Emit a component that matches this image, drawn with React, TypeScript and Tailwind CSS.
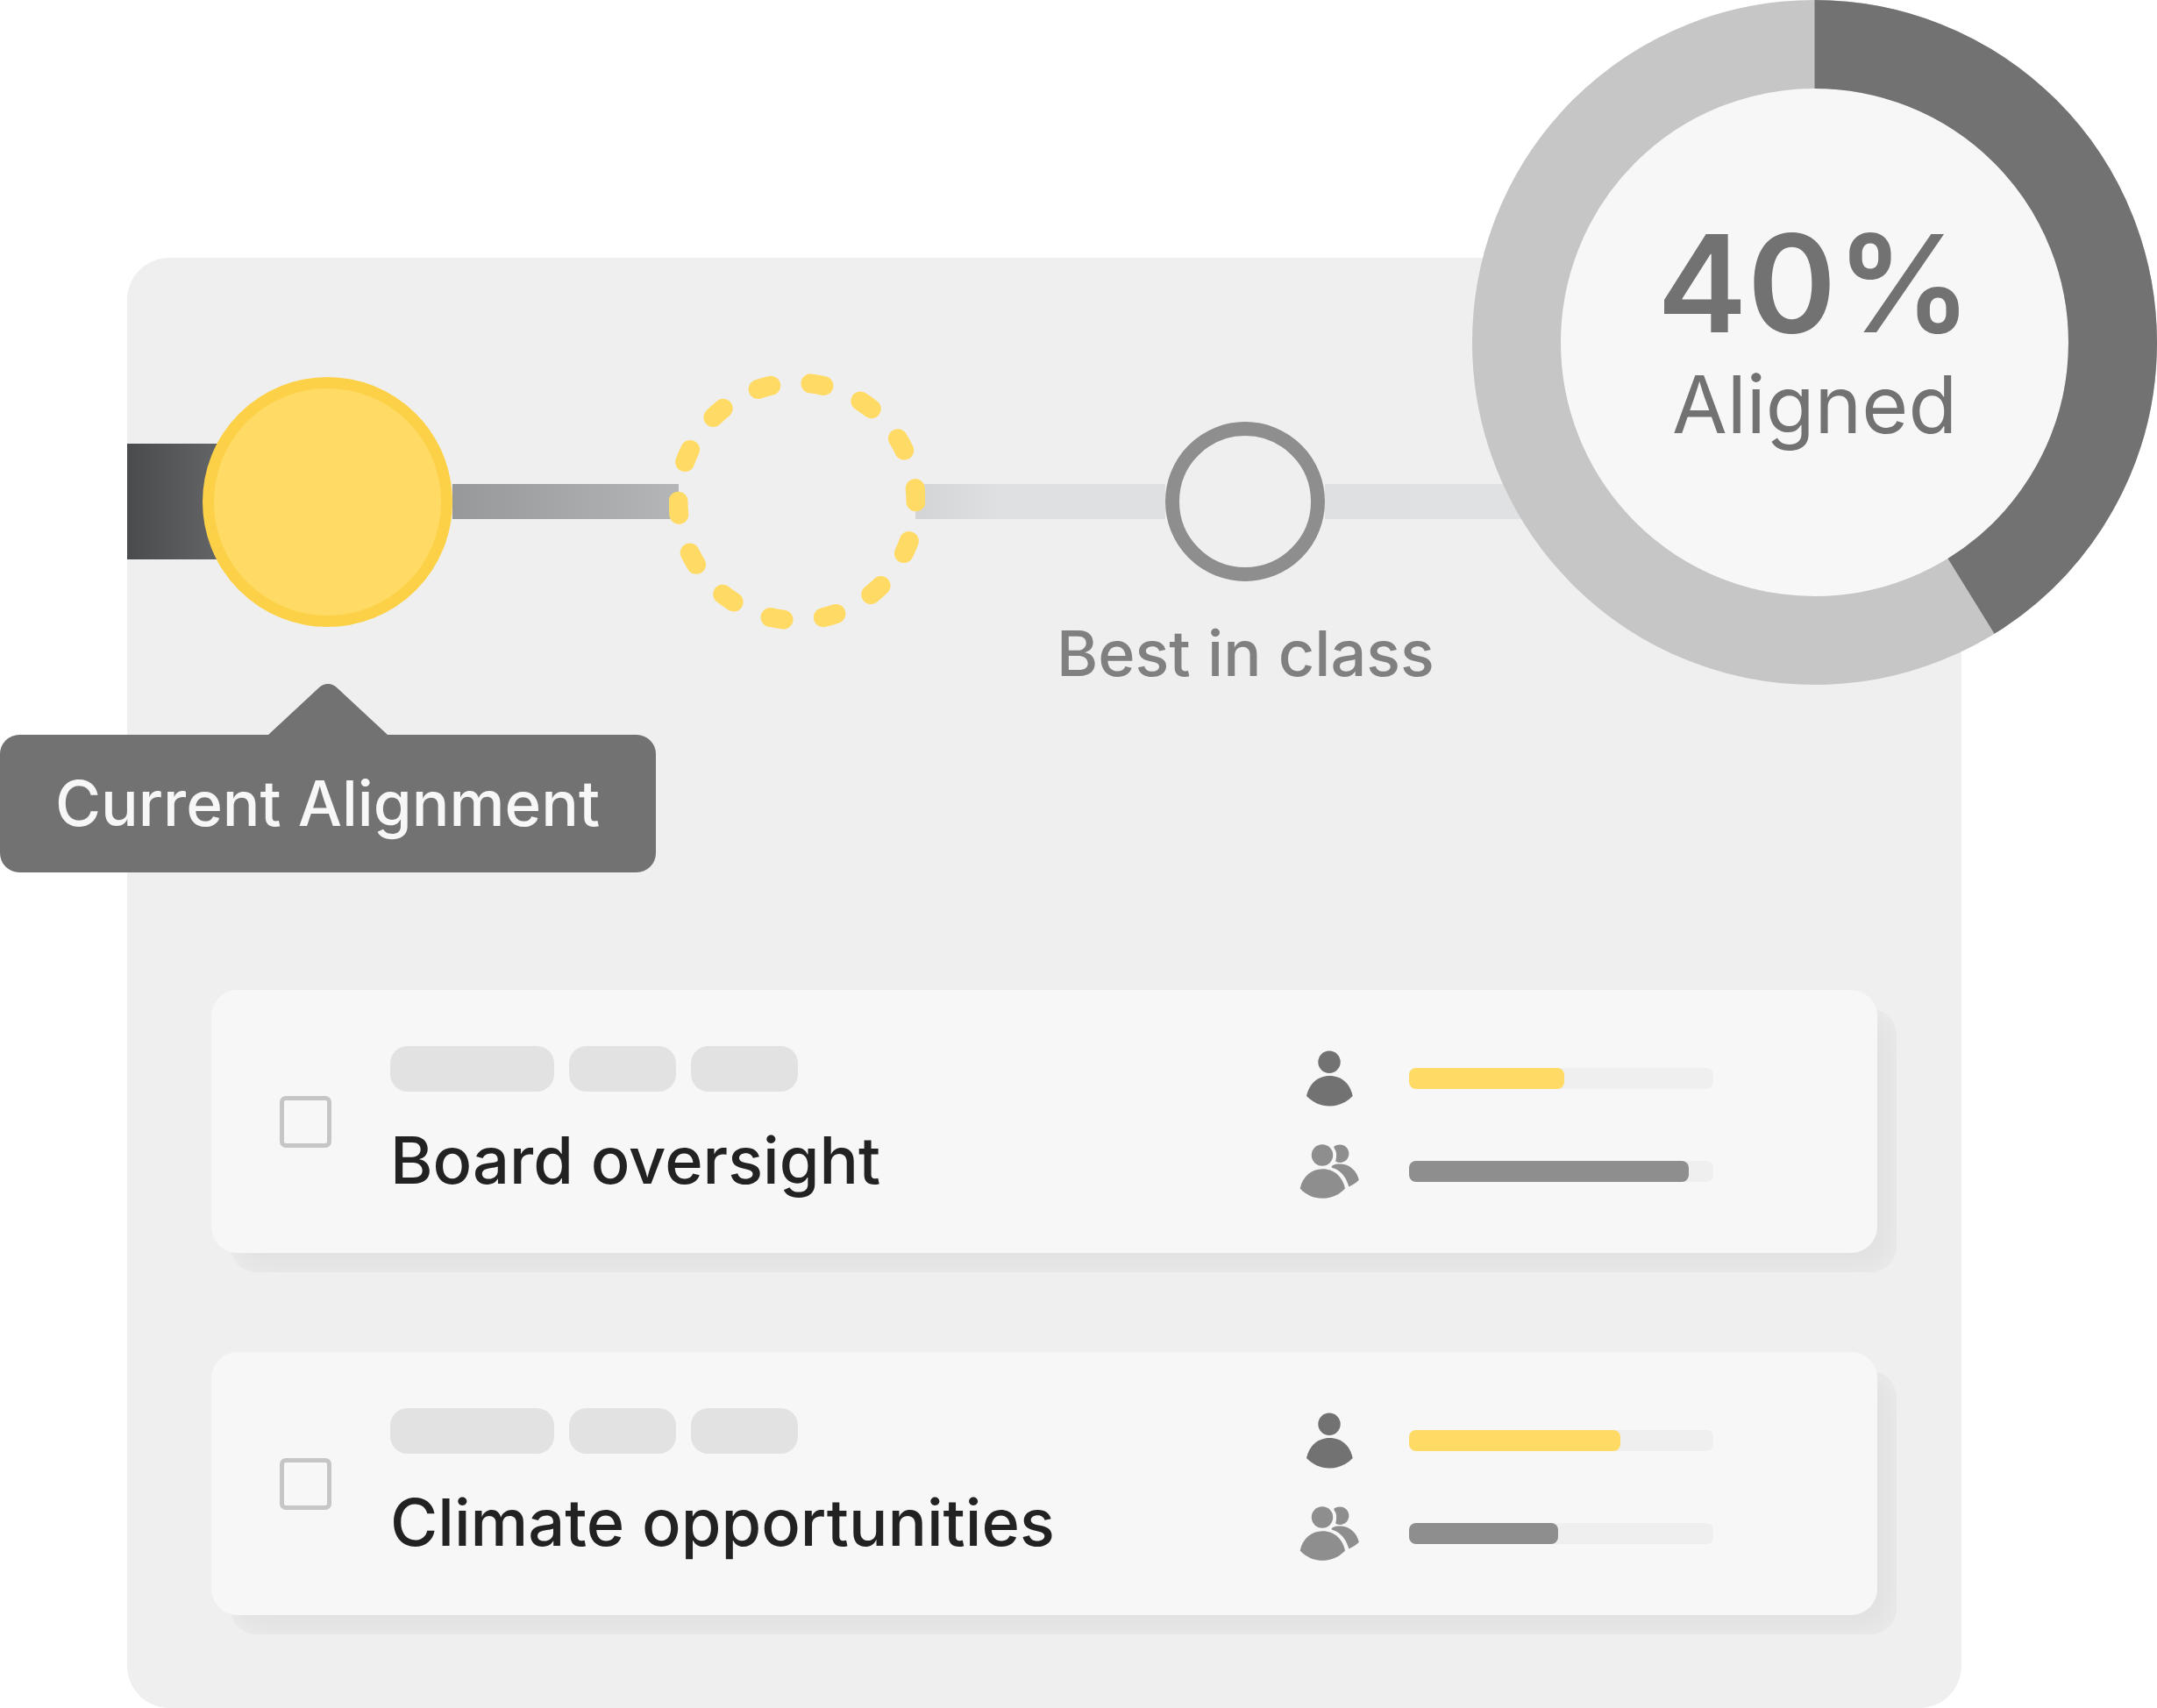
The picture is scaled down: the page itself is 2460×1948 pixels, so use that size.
type Topic = {
  id: string;
  title: string;
  own: number;
  peers: number;
};

const topics: Topic[] = [
  { id: 'board', title: 'Board oversight', own: 51, peers: 92 },
  { id: 'climate', title: 'Climate opportunities', own: 69.5, peers: 49 },
];

function PersonIcon() {
  return (
    <svg viewBox="0 0 68 64" className="w-[68px] h-16 shrink-0 fill-[#727272]">
      <circle cx="34" cy="13.3" r="12.7" />
      <path d="M8 52 C11 38 21 29 34.3 29 C48 29 58 38 60.7 52 C54 59 45 63.5 34.3 63.5 C24 63.5 15 59 8 52 Z" />
    </svg>
  );
}

function PeopleIcon() {
  return (
    <svg viewBox="0 0 68 64" className="w-[68px] h-16 shrink-0 fill-[#8e8e8e]">
      <circle cx="26" cy="13.5" r="12.2" />
      <path d="M0.7 51.5 C3.5 38 13.5 29.3 26.3 29.3 C39.5 29.3 49.3 38 52 51.5 C45 59 36.5 62.8 26.3 62.8 C16 62.8 8 59 0.7 51.5 Z" />
      {/* second person, partly hidden */}
      <path d="M39.3 3.8 C41 2 43.5 1.5 46.3 1.5 C52 1.5 56.4 6 56.4 11.6 C56.4 17.5 52 22 46.3 22 C44.3 22 42.6 21.5 41.2 20.4 C42.3 16.5 42.4 12 41.6 9 C41 6.8 39 5.5 39.3 3.8 Z" />
      <path d="M36.6 26.4 C38 24.3 42.5 23.4 47.3 23.4 C57.5 24 65.5 31 67.8 41.8 C65 45 61 47.5 56.4 49.4 C53.5 39.5 48.5 32 39.5 28.6 C37.8 28 36.6 27.6 36.6 26.4 Z" />
    </svg>
  );
}

function Bar({ value, label, color }: { value: number; label: string; color: string }) {
  return (
    <div
      role="progressbar"
      aria-label={label}
      aria-valuenow={value}
      className="w-[347px] h-6 rounded-lg bg-[#efefef]"
    >
      <div className={`h-full rounded-lg ${color}`} style={{ width: `${value}%` }}></div>
    </div>
  );
}

function TopicCard({ id, title, own, peers }: Topic) {
  return (
    <li className="relative">
      {/* Card shadow */}
      <div className="absolute top-[22px] left-[22px] w-full h-full rounded-[30px] bg-[#e1e1e1] shadow-[inset_0_0_36px_#eeeeee]"></div>

      <div className="relative flex items-center h-[300px] pl-[78px] pr-[187px] rounded-[30px] bg-[#f7f7f7]">
        <input
          id={id}
          type="checkbox"
          className="appearance-none size-[59px] shrink-0 border-[5px] border-[#c6c6c6] rounded-[7px] checked:bg-[#c6c6c6]"
        />
        <div className="flex-1 pl-[67px]">
          <div className="flex gap-[17px]">
            <div className="w-[187px] h-[52px] rounded-[20px] bg-[#e2e2e2]"></div>
            <div className="w-[122px] h-[52px] rounded-[20px] bg-[#e2e2e2]"></div>
            <div className="w-[122px] h-[52px] rounded-[20px] bg-[#e2e2e2]"></div>
          </div>
          <label
            htmlFor={id}
            className="block mt-9 text-[74px] leading-[84px] font-medium text-[#222222] whitespace-nowrap"
          >
            {title}
          </label>
        </div>
        <div className="flex flex-col gap-[42px] pt-2">
          <div className="flex items-center gap-[57px]">
            <PersonIcon />
            <Bar value={own} label={`${title}, own`} color="bg-[#ffdb66]" />
          </div>
          <div className="flex items-center gap-[57px]">
            <PeopleIcon />
            <Bar value={peers} label={`${title}, peers`} color="bg-[#8e8e8e]" />
          </div>
        </div>
      </div>
    </li>
  );
}

function Timeline() {
  return (
    <div className="flex items-center h-[292px]">
      <div className="w-[110px] h-[132px] shrink-0 bg-linear-to-r from-[#4a4b4c] to-[#656668]"></div>

      {/* Current step */}
      <div className="relative z-10 size-[285px] -ml-6 shrink-0 rounded-full border-[13px] border-[#fdd147] bg-[#ffdb66]">
        <div className="absolute top-full left-1/2 -translate-x-1/2 mt-[78px] flex flex-col items-center">
          <svg viewBox="0 0 136 58" className="w-[136px] h-[58px] fill-[#727272]">
            <path d="M0 58 L57 5 Q62 0 68 0 Q74 0 79 5 L136 58 Z" />
          </svg>
          <div className="w-[748px] h-[157px] flex items-center justify-center rounded-[22px] bg-[#727272] text-[71px] font-medium text-[#f7f7f7] whitespace-nowrap">
            Current Alignment
          </div>
        </div>
      </div>

      <div className="flex-[258] h-10 bg-linear-to-r from-[#97989a] to-[#b5b6b8]"></div>

      {/* Target step */}
      <svg
        viewBox="0 0 292 292"
        className="relative z-10 size-[292px] -mx-[11px] shrink-0 fill-none stroke-[#ffdb66]"
      >
        <circle
          cx="146"
          cy="146"
          r="135.5"
          pathLength="336"
          strokeWidth="22"
          strokeLinecap="round"
          strokeDasharray="6 18"
          transform="rotate(-6.3 146 146)"
        />
      </svg>

      <div className="flex-[285] h-10 bg-linear-to-r from-[#d3d4d6] via-[#dfe0e2] via-35% to-[#dfe0e2]"></div>

      {/* Best step */}
      <div className="relative size-[182px] shrink-0 rounded-full border-[16px] border-[#8e8e8e]">
        <p className="absolute top-full left-1/2 -translate-x-1/2 mt-[58px] text-[72px] leading-[80px] font-medium text-[#808080] whitespace-nowrap">
          Best in class
        </p>
      </div>

      <div className="flex-[725] h-10 bg-linear-to-r from-[#dfe0e2] to-[#e3e4e6]"></div>
    </div>
  );
}

function Donut() {
  return (
    <div className="absolute top-0 right-0 z-20 grid size-[781px] place-items-center">
      <svg viewBox="0 0 781 781" className="col-start-1 row-start-1 w-full h-full">
        <circle cx="390.5" cy="390.5" r="340" fill="#f7f7f7" stroke="#c6c6c6" strokeWidth="101" />
        <circle
          cx="390.5"
          cy="390.5"
          r="340"
          fill="none"
          stroke="#727272"
          strokeWidth="101"
          pathLength="1000"
          strokeDasharray="412 588"
          transform="rotate(-90 390.5 390.5)"
        />
      </svg>
      <div className="col-start-1 row-start-1 flex flex-col items-center gap-2 pb-7 text-[#727272]">
        <p className="text-[154px] leading-[160px] font-semibold">40%</p>
        <p className="text-[91px] leading-[100px]">Aligned</p>
      </div>
    </div>
  );
}

function App() {
  return (
    <div className="relative pt-[294px] pl-[145px] pr-[223px] bg-white font-['Inter',sans-serif]">
      <Donut />
      <main className="pt-[132px] pb-[106px] rounded-[48px] bg-[#efefef]">
        <Timeline />
        {/* List */}
        <ul className="flex flex-col gap-[113px] mt-[411px] px-24">
          {topics.map((topic) => (
            <TopicCard key={topic.id} {...topic} />
          ))}
        </ul>
      </main>
    </div>
  );
}

export default App;
